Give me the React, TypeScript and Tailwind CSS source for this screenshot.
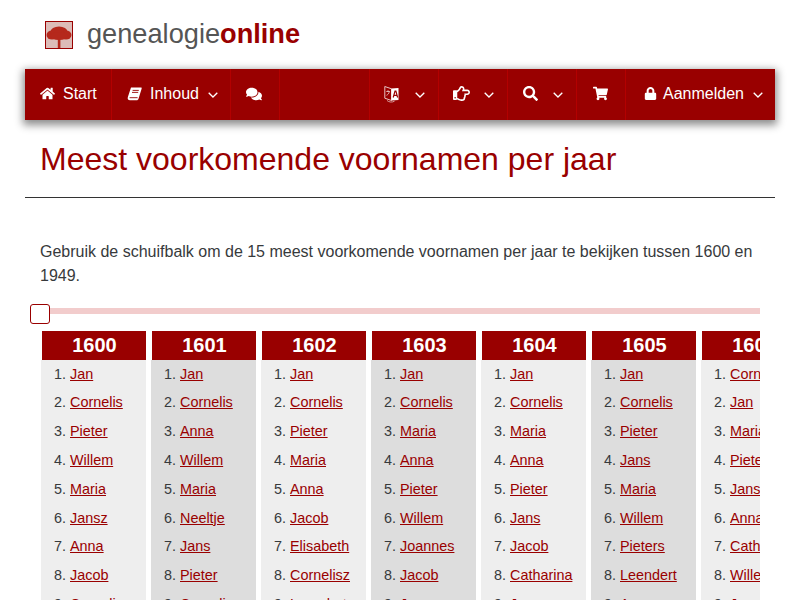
import React from 'react';
import { FaComments, FaHome, FaLock, FaRegHandPointRight, FaSearch, FaShoppingCart } from 'react-icons/fa';

const years = [
  { year: '1600', names: ['Jan', 'Cornelis', 'Pieter', 'Willem', 'Maria', 'Jansz', 'Anna', 'Jacob', 'Cornelis'] },
  { year: '1601', names: ['Jan', 'Cornelis', 'Anna', 'Willem', 'Maria', 'Neeltje', 'Jans', 'Pieter', 'Cornelis'] },
  { year: '1602', names: ['Jan', 'Cornelis', 'Pieter', 'Maria', 'Anna', 'Jacob', 'Elisabeth', 'Cornelisz', 'Leendert'] },
  { year: '1603', names: ['Jan', 'Cornelis', 'Maria', 'Anna', 'Pieter', 'Willem', 'Joannes', 'Jacob', 'Jans'] },
  { year: '1604', names: ['Jan', 'Cornelis', 'Maria', 'Anna', 'Pieter', 'Jans', 'Jacob', 'Catharina', 'Jansz'] },
  { year: '1605', names: ['Jan', 'Cornelis', 'Pieter', 'Jans', 'Maria', 'Willem', 'Pieters', 'Leendert', 'Anna'] },
  { year: '1606', names: ['Cornelis', 'Jan', 'Maria', 'Pieter', 'Jans', 'Anna', 'Catharina', 'Willem', 'Jacob'] },
];

function Chevron() {
  return (
    <svg width="10" height="6" viewBox="0 0 10 6" fill="none" className="shrink-0 mt-[2px]">
      <path d="M.7.7 5 5 9.300.7" stroke="#fff" strokeWidth="1.300" />
    </svg>
  );
}

function BookIcon() {
  return (
    <svg width="15" height="14" viewBox="0 0 15 14" className="shrink-0">
      <path d="M4 .5h10.500l.2 1L11.600 11.500c-.3 1-.9 1.800-2.100 1.800H3C1.300 13.300.3 12 .8 10.300Z" fill="#fff" />
      <path d="M5.600 3.400h6.200M5 5.400h6.200M2.600 10.700h8" stroke="#990000" strokeWidth="0.900" />
    </svg>
  );
}

function LanguageIcon() {
  return (
    <svg width="15" height="18" viewBox="0 0 15 18" fill="none" className="shrink-0">
      <path d="M.8 1.500 7.500 3.800V15.500L.8 13.200Z" stroke="#f0d8d8" strokeWidth="0.900" />
      <path d="M7.500 3.500 14.500 3V15L7.500 15.500Z" fill="#fff" />
      <path d="M2.300 6.500h3.500M4 5.200v1.300M5.300 6.500c-.3 2-1.200 3-2.800 3.800" stroke="#f0d8d8" strokeWidth="0.800" />
      <path d="M9.200 12.500 11 6h.9l1.700 6.500M9.900 10.300h3" stroke="#990000" strokeWidth="1.200" />
      <path d="M3 15.500c2 1.800 5 2 7.500.7" stroke="#f0d8d8" strokeWidth="0.700" />
    </svg>
  );
}

function TreeLogo() {
  return (
    <div className="w-7 h-7 border border-[#990000] bg-[#dcbcb8]">
      <svg width="26" height="26" viewBox="0 0 26 26" fill="#b5281c">
        <ellipse cx="6" cy="13" rx="5.500" ry="4.500" />
        <ellipse cx="13" cy="10" rx="8.500" ry="5.500" />
        <ellipse cx="20" cy="13" rx="5.500" ry="4.500" />
        <ellipse cx="13" cy="14" rx="9" ry="4" />
        <path d="M11.800 15h2.600v11h-2.600Z" />
      </svg>
    </div>
  );
}

function NavItem({ className, children, last }: { className: string; children?: React.ReactNode; last?: boolean }) {
  return (
    <div className={`${className} ${last ? '' : 'border-r border-[#b30000]'} flex items-center h-full pb-[2px] shrink-0`}>
      {children}
    </div>
  );
}

export default function App() {
  return (
    <div className="w-[800px] h-[600px] overflow-hidden bg-white text-[#373a3c] font-['Liberation_Sans',Arial,sans-serif]">
      <div className="h-[69px] pl-[45px] pt-[21px] flex items-start gap-[14px]">
        <TreeLogo />
        <div className="text-[27.2px] leading-[25px] text-[#555]">
          genealogie<span className="font-bold text-[#990000]">online</span>
        </div>
      </div>

      <div className="mx-[25px]">
        <nav className="h-[51px] bg-[#990000] text-white text-base flex shadow-[0_3px_8px_2px_rgba(0,0,0,0.45)]">
          <NavItem className="w-[87px] pl-[15px] gap-2">
            <FaHome size={15} />
            <span>Start</span>
          </NavItem>
          <NavItem className="w-[119px] pl-[15px] gap-2">
            <BookIcon />
            <span className="mr-px">Inhoud</span>
            <Chevron />
          </NavItem>
          <NavItem className="w-[49px] pl-[15px]">
            <FaComments size={16} />
          </NavItem>
          <NavItem className="w-[90px]" />
          <NavItem className="w-[69px] pl-[14px] gap-4">
            <LanguageIcon />
            <Chevron />
          </NavItem>
          <NavItem className="w-[69px] pl-[14px] gap-[14px]">
            <FaRegHandPointRight size={17} />
            <Chevron />
          </NavItem>
          <NavItem className="w-[69px] pl-[15px] gap-[15px]">
            <FaSearch size={15} />
            <Chevron />
          </NavItem>
          <NavItem className="w-[49px] pl-[16px]">
            <FaShoppingCart size={15} />
          </NavItem>
          <NavItem className="w-[149px] pl-[18px] gap-[6px]" last>
            <FaLock size={13} />
            <span className="mr-[3px]">Aanmelden</span>
            <Chevron />
          </NavItem>
        </nav>

        <div className="h-[78px] border-b border-[#333] px-[15px] pt-[20px]">
          <h1 className="text-[32px] leading-[38px] text-[#990000]">Meest voorkomende voornamen per jaar</h1>
        </div>
      </div>

      <div className="px-[40px] pt-[42px]">
        <p className="text-base leading-[24px]">
          Gebruik de schuifbalk om de 15 meest voorkomende voornamen per jaar te bekijken tussen 1600 en 1949.
        </p>

        <div className="relative h-[6px] mt-[20px] bg-[#f2cccc]">
          <div className="absolute left-[-10px] top-[-4px] w-5 h-5 bg-white border border-[#990000] rounded-[3px]" />
        </div>

        <div className="mt-[17px] flex gap-[5px] overflow-hidden pl-px">
          {years.map((col, i) => (
            <div key={col.year} className="w-[105px] shrink-0">
              <div className="ml-px pl-px h-[29px] bg-[#990000] text-white text-center text-xl leading-[29px] font-bold">
                {col.year}
              </div>
              <ol className={`${i % 2 === 0 ? 'bg-[#eeeeee]' : 'bg-[#dddddd]'} list-decimal pl-[29px] mt-[-0.4px] text-[14.4px] leading-[28.8px] h-[300px]`}>
                {col.names.map((name, n) => (
                  <li key={n}>
                    <a href="#" className="text-[#990000] underline">
                      {name}
                    </a>
                  </li>
                ))}
              </ol>
            </div>
          ))}
        </div>
      </div>
    </div>
  );
}
